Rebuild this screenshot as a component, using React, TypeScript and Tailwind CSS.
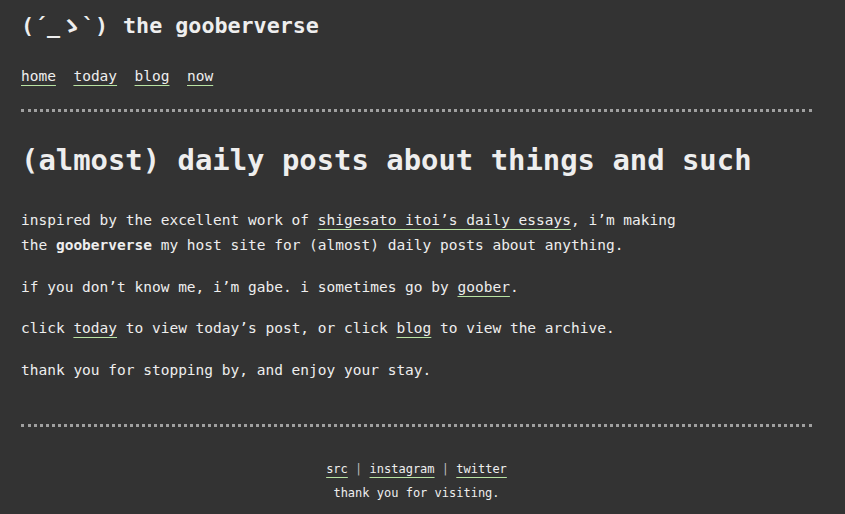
const links = ["home", "today", "blog", "now"];

function Link({ children }: { children: React.ReactNode }) {
  return (
    <a href="#" className="text-[#eee] underline decoration-[#b9e3a3] decoration-1 underline-offset-[4px]">
      {children}
    </a>
  );
}

export default function App() {
  return (
    <div className="min-h-screen bg-[#333] text-[#eee] font-['DejaVu_Sans_Mono','Noto_Sans_CJK_JP',monospace]">
      <div className="ml-[21px] w-[791px]">
        <header className="pt-[11px]">
          <h1 className="text-[21.7px] font-bold leading-[30px]">
            <span className="mr-[2px]">(´_ゝ`)</span> the gooberverse
          </h1>
          <nav className="mt-[23px] flex gap-[17.5px] text-[14.5px] leading-[25px]">
            {links.map((l) => (
              <Link key={l}>{l}</Link>
            ))}
          </nav>
        </header>

        <div className="mt-[20px] border-t-[3px] border-dotted border-[#a0a0a0]" />

        <main>
          <h2 className="mt-[28px] text-[28.9px] font-bold leading-[40px]">
            (almost) daily posts about things and such
          </h2>
          <div className="mt-[28px] flex flex-col gap-[16.5px] text-[14.5px] leading-[25px]">
            <p>
              inspired by the excellent work of <Link>shigesato itoi’s daily essays</Link>, i’m making
              <br />
              the <b>gooberverse</b> my host site for (almost) daily posts about anything.
            </p>
            <p>
              if you don’t know me, i’m gabe. i sometimes go by <Link>goober</Link>.
            </p>
            <p>
              click <Link>today</Link> to view today’s post, or click <Link>blog</Link> to view the archive.
            </p>
            <p>thank you for stopping by, and enjoy your stay.</p>
          </div>
        </main>

        <div className="mt-[41.5px] border-t-[3px] border-dotted border-[#a0a0a0]" />

        <footer className="mt-[30px] text-center text-[12px] leading-[24px]">
          <div>
            <Link>src</Link> <span className="text-[#bbb]">|</span> <Link>instagram</Link>{" "}
            <span className="text-[#bbb]">|</span> <Link>twitter</Link>
          </div>
          <div>thank you for visiting.</div>
        </footer>
      </div>
    </div>
  );
}
